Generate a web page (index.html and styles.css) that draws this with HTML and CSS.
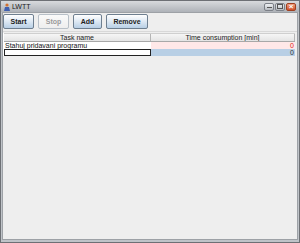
FILE: index.html
```html
<!DOCTYPE html>
<html lang="en">
<head>
    <meta charset="UTF-8">
    <title>LWTT</title>
    <link rel="stylesheet" href="styles.css">
</head>
<body>
    <div class="window">
        <div class="titlebar">
            <div class="title">
                <svg class="app-icon" width="8" height="8" viewBox="0 0 8 8">
                    <circle cx="4" cy="2" r="1.6" fill="#d07030"/>
                    <path d="M1 8 L2 4 L6 4 L7 8 Z" fill="#4060b0"/>
                </svg>
                <span>LWTT</span>
            </div>
            <div class="win-buttons">
                <span class="win-btn"><i class="min"></i></span>
                <span class="win-btn"><i class="max"></i></span>
                <span class="win-btn close">&#215;</span>
            </div>
        </div>

        <div class="content">
            <div class="toolbar">
                <button class="tool-btn">Start</button>
                <button class="tool-btn" disabled>Stop</button>
                <button class="tool-btn">Add</button>
                <button class="tool-btn">Remove</button>
            </div>

            <div class="table-pane">
                <div class="table">
                    <div class="row header">
                        <div class="cell">Task name</div>
                        <div class="cell">Time consumption [min]</div>
                    </div>
                    <div class="row">
                        <div class="cell name">Stahuj pridavani programu</div>
                        <div class="cell time odd">0</div>
                    </div>
                    <div class="row selected">
                        <div class="cell name editing"></div>
                        <div class="cell time">0</div>
                    </div>
                </div>
            </div>
        </div>
    </div>
</body>
</html>
```

FILE: styles.css
```css
body {
    margin: 0;
    padding: 0;
    font-family: "Liberation Sans", Arial, sans-serif;
    font-size: 7px;
    background: #ffffff;
}

.window {
    width: 300px;
    height: 243px;
    box-sizing: border-box;
    display: flex;
    flex-direction: column;
    background: #bfc3c8;
    border: 1px solid #6d7075;
    padding: 0 1px 2px 1px;
}

/* Title bar */
.titlebar {
    height: 11px;
    flex: none;
    display: flex;
    justify-content: space-between;
    align-items: center;
    background: linear-gradient(#d8dadd, #aeb2b8);
    margin: 0 -1px;
    padding: 0 3px 0 2px;
}

.title {
    display: flex;
    align-items: center;
    gap: 1px;
    color: #1a1a1a;
    font-size: 7px;
}

.win-buttons {
    display: flex;
    gap: 1px;
}

.win-btn {
    width: 10px;
    height: 8px;
    box-sizing: border-box;
    border: 1px solid #7c8088;
    border-radius: 2px;
    background: linear-gradient(#eef0f2, #b8bcc2);
    display: flex;
    justify-content: center;
    align-items: center;
}

.win-btn .min {
    width: 5px;
    height: 1px;
    background: #555;
    margin-top: 2px;
}

.win-btn .max {
    width: 4px;
    height: 3px;
    border: 1px solid #555;
}

.win-btn.close {
    background: linear-gradient(#f0a080, #d0502a);
    border-color: #a04020;
    color: #ffffff;
    font-size: 8px;
    line-height: 6px;
    font-weight: bold;
}

/* Main area */
.content {
    flex: 1;
    display: flex;
    flex-direction: column;
    background: #eeeeee;
    border: 1px solid #9da1a6;
}

.toolbar {
    display: flex;
    gap: 4px;
    padding: 1px 0 2px 0;
    border-bottom: 1px solid #d8d8d8;
}

.tool-btn {
    height: 15px;
    padding: 0;
    border: 1px solid #6e7f90;
    border-radius: 2px;
    background: linear-gradient(#ffffff, #dde8f3 50%, #b8cfe5);
    font-family: "Liberation Sans", Arial, sans-serif;
    font-size: 7px;
    font-weight: bold;
    color: #222;
    width: 31px;
}

.tool-btn:nth-child(3) {
    width: 29px;
}

.tool-btn:nth-child(4) {
    width: 42px;
}

.tool-btn:disabled {
    color: #9a9a9a;
    background: linear-gradient(#fafafa, #eeeeee);
    border-color: #b8c0c8;
}

.table-pane {
    flex: 1;
    margin-top: 1px;
    padding-right: 2px;
}

.table {
    border-left: 1px solid #ffffff;
}

.row {
    display: grid;
    grid-template-columns: 147px 1fr;
    height: 7px;
    line-height: 7px;
}

.cell {
    padding: 0 1px;
    white-space: nowrap;
    overflow: hidden;
}

.header {
    height: 7px;
    background: linear-gradient(#f6f6f6, #e4e4e4);
    border-top: 1px solid #cfcfcf;
    border-bottom: 1px solid #a8a8a8;
}

.header .cell {
    text-align: center;
    border-right: 1px solid #b5b5b5;
    color: #222;
}

.row .name {
    background: #ffffff;
    color: #111;
}

.row .time {
    text-align: right;
    color: #e02020;
}

.row .time.odd {
    background: #ffe8e8;
}

.selected .time {
    background: #b8cfe5;
    color: #333;
}

.selected .name.editing {
    border: 1px solid #222;
    box-sizing: border-box;
    background: #ffffff;
}
```
